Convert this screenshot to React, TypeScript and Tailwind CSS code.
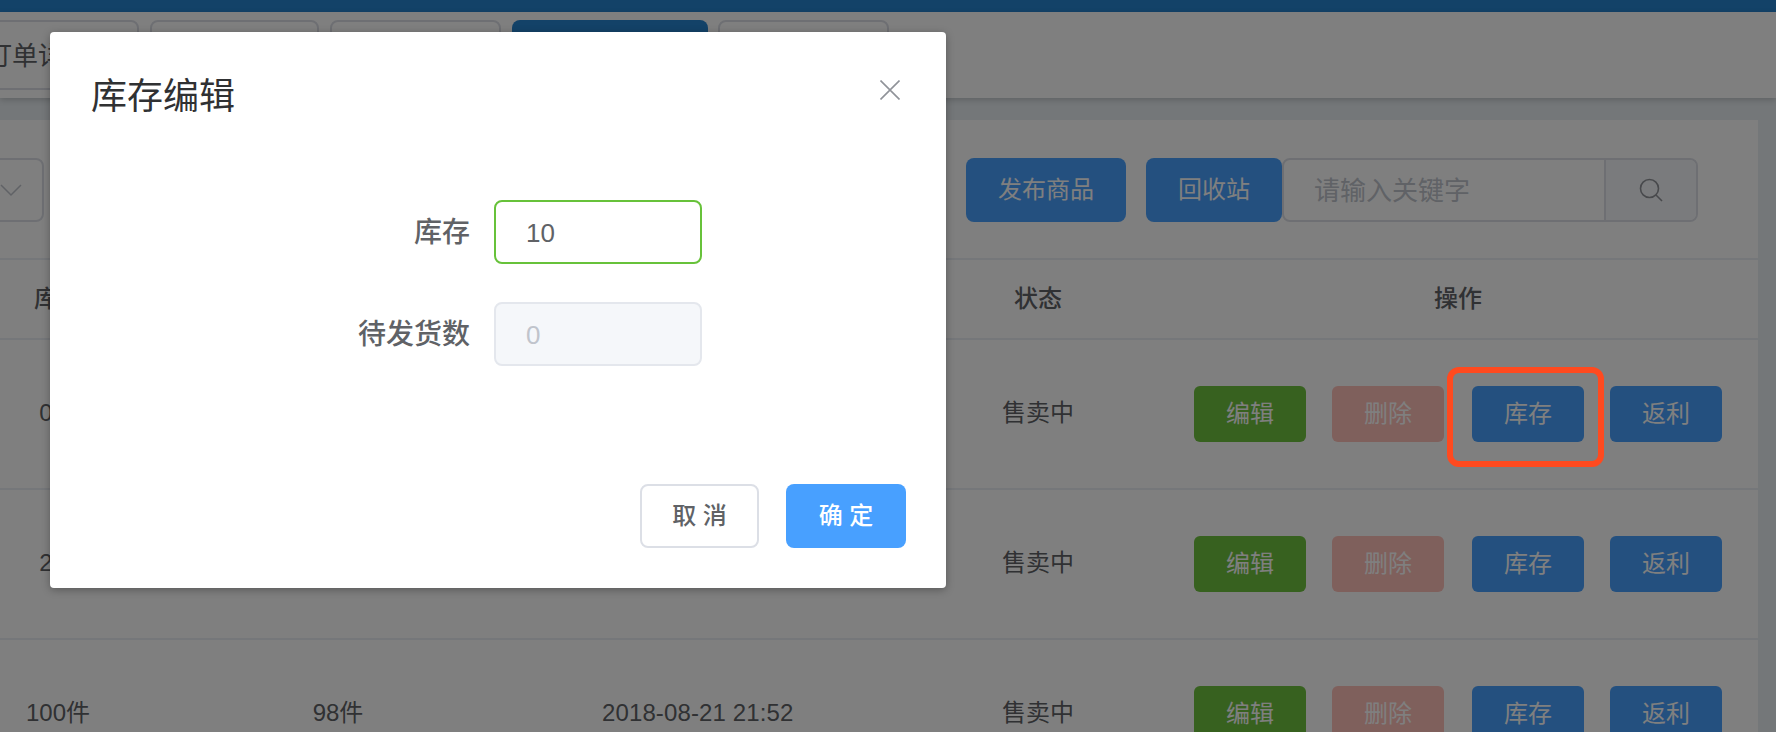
const FONT = "font-['Liberation_Sans','Noto_Sans_CJK_SC',sans-serif]";

// 列表里的一行：行高 150，底部一条细线
function Row({ stock, sold, date }: { stock: string; sold: string; date: string }) {
  return (
    <div className="grid h-[150px] shrink-0 grid-cols-[116px_442px_378px_202px_584px] items-center border-b-2 border-[#ebeef5] text-[24px] text-[#606266]">
      <div className="mb-[3px] text-center">{stock}</div>
      <div className="mb-[3px] pl-[2px] text-center">{sold}</div>
      <div className="mb-[3px] pl-[44px] tracking-[0.12px]">{date}</div>
      <div className="mb-[3px] pl-[2px] text-center">售卖中</div>
      <div className="flex pl-[56px]">
        <button className="h-[56px] w-[112px] rounded-[6px] bg-[#6ec23e] text-white">编辑</button>
        <button className="ml-[26px] h-[56px] w-[112px] rounded-[6px] bg-[#ffc0b8] text-white">删除</button>
        <button className="ml-[28px] h-[56px] w-[112px] rounded-[6px] bg-[#48a0ff] text-white">库存</button>
        <button className="ml-[26px] h-[56px] w-[112px] rounded-[6px] bg-[#48a0ff] text-white">返利</button>
      </div>
    </div>
  );
}

export default function App() {
  return (
    <div className={`relative flex h-[732px] w-full flex-col overflow-hidden bg-[#e8eef2] ${FONT}`}>
      <div className="h-[12px] shrink-0 bg-[#2684d0]" />

      {/* 标签栏 */}
      <div className="flex h-[86px] shrink-0 gap-[11px] bg-white pt-[8px] shadow-[0_2px_6px_rgba(0,0,0,0.18)]">
        <div className="-ml-[63px] flex h-[70px] w-[202px] items-center justify-center rounded-[8px] border-2 border-[#dcdfe6] pt-[3px] text-[26px] text-[#606266]">
          订单详情
        </div>
        <div className="h-[70px] w-[169px] rounded-[8px] border-2 border-[#dcdfe6]" />
        <div className="h-[70px] w-[171px] rounded-[8px] border-2 border-[#dcdfe6]" />
        <div className="h-[70px] w-[196px] rounded-[8px] bg-[#2684d0]" />
        <div className="-ml-px h-[70px] w-[171px] rounded-[8px] border-2 border-[#dcdfe6]" />
      </div>

      {/* 内容面板 */}
      <div className="mt-[22px] mr-[18px] flex flex-1 flex-col overflow-hidden bg-white">
        <div className="flex h-[140px] shrink-0 items-start border-b-2 border-[#ebeef5] pt-[38px] pr-[60px]">
          <div className="-ml-[156px] flex h-[64px] w-[200px] items-center rounded-[8px] border-2 border-[#dcdfe6] pl-[154px]">
            <svg width="22" height="14" viewBox="0 0 22 14" fill="none" stroke="#c0c4cc" strokeWidth="1.5">
              <path d="M1 2l10 10L21 2" />
            </svg>
          </div>
          <button className="ml-auto h-[64px] w-[160px] rounded-[8px] bg-[#48a0ff] text-[24px] text-white">发布商品</button>
          <button className="ml-[20px] h-[64px] w-[136px] rounded-[8px] bg-[#48a0ff] text-[24px] text-white">回收站</button>
          <div className="flex h-[64px] w-[416px] rounded-[8px] border-2 border-[#dcdfe6]">
            <div className="flex flex-1 items-center pt-[2px] pl-[30px] text-[26px] text-[#c0c4cc]">请输入关键字</div>
            <div className="flex w-[92px] items-center justify-center rounded-r-[6px] border-l-2 border-[#dcdfe6] bg-[#f5f7fa]">
              <svg width="24" height="24" viewBox="0 0 24 24" fill="none" stroke="#909399" strokeWidth="1.6">
                <circle cx="10.5" cy="10.5" r="9" />
                <path d="M17 17L23 23" />
              </svg>
            </div>
          </div>
        </div>

        <div className="grid h-[80px] shrink-0 grid-cols-[116px_442px_378px_202px_584px] items-center border-b-2 border-[#ebeef5] text-[24px] font-medium text-[#606266]">
          <div className="text-center">库存</div>
          <div />
          <div />
          <div className="pl-[2px] text-center">状态</div>
          <div className="pl-[56px] text-center">操作</div>
        </div>

        <Row stock="0件" sold="" date="" />
        <Row stock="2件" sold="" date="" />
        <Row stock="100件" sold="98件" date="2018-08-21 21:52" />
      </div>

      {/* 遮罩 */}
      <div className="absolute inset-0 z-10 bg-black/50" />

      {/* 截图上的红框标注 */}
      <div className="absolute top-[367px] left-[1447px] z-20 h-[100px] w-[157px] rounded-[12px] border-[6px] border-[#ff4a1f]" />

      {/* 库存编辑弹窗 */}
      <div className="absolute top-[32px] left-[50px] z-20 flex h-[556px] w-[896px] flex-col rounded-[4px] bg-white shadow-[0_2px_8px_rgba(0,0,0,0.3)]">
        <div className="flex items-start justify-between pt-[40px] pr-[46px] pl-[41px]">
          <span className="text-[36px] leading-[50px] text-[#303133]">库存编辑</span>
          <svg className="mt-[8px]" width="20" height="20" viewBox="0 0 20 20" fill="none" stroke="#909399" strokeWidth="1.6">
            <path d="M0.5 0.5l19 19M19.5 0.5l-19 19" />
          </svg>
        </div>

        <div className="mt-[78px] flex flex-col gap-[38px]">
          <div className="flex items-center">
            <label className="w-[420px] pt-[2px] text-right text-[28px] font-medium text-[#606266]">库存</label>
            <div className="ml-[24px] flex h-[64px] w-[208px] items-center rounded-[8px] border-2 border-[#67c23a] pt-[2px] pl-[30px] text-[26px] text-[#606266]">10</div>
          </div>
          <div className="flex items-center">
            <label className="w-[420px] pt-[2px] text-right text-[28px] font-medium text-[#606266]">待发货数</label>
            <div className="ml-[24px] flex h-[64px] w-[208px] items-center rounded-[8px] border-2 border-[#e4e7ed] bg-[#f5f7fa] pt-[2px] pl-[30px] text-[26px] text-[#c0c4cc]">0</div>
          </div>
        </div>

        <div className="mt-auto flex justify-end gap-[27px] pr-[40px] pb-[40px]">
          <button className="h-[64px] w-[119px] rounded-[8px] border-2 border-[#dcdfe6] text-[24px] font-medium text-[#606266]">取 消</button>
          <button className="h-[64px] w-[120px] rounded-[8px] bg-[#48a0ff] text-[24px] font-medium text-white">确 定</button>
        </div>
      </div>
    </div>
  );
}
